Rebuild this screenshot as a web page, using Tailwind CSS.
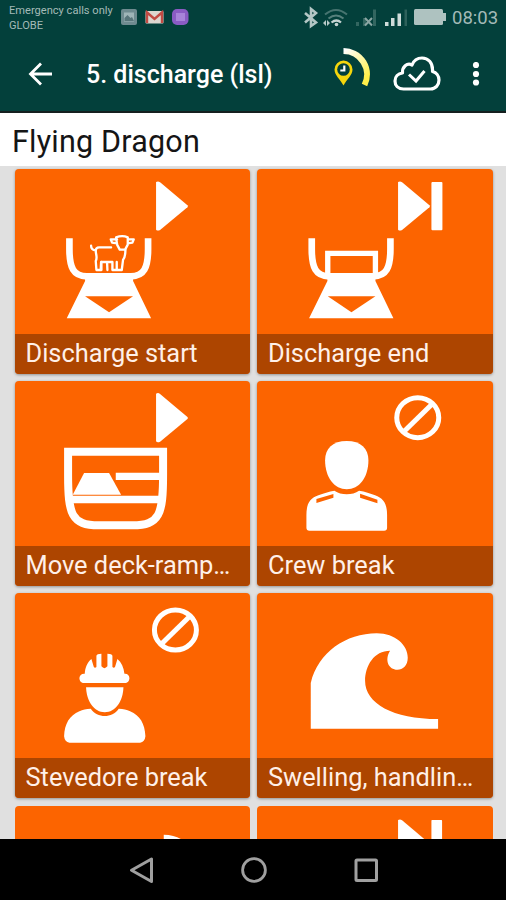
<!DOCTYPE html>
<html lang="en">

<head>
  <meta charset="utf-8">
  <title>5. discharge (lsl)</title>
  <script src="https://cdn.jsdelivr.net/npm/@tailwindcss/browser@4"></script>
</head>

<body class="bg-black font-['Roboto',sans-serif]">
  <div class="flex flex-col h-[900px] w-[506px] overflow-hidden">

    <!-- Status bar + toolbar -->
    <header class="shrink-0 h-[113px] bg-[#03403b] border-b-2 border-[#151f1f]">
      <div class="flex items-start h-9 pl-[9px] pr-2 text-[#a3bab7]">
        <div class="w-[112px] pt-[3px] text-[11.100px] leading-[15px] whitespace-nowrap"><span id="carrier">Emergency calls only</span><br>GLOBE</div>
        <svg class="w-[68px] h-4 mt-[9px]" viewBox="0 0 68 16">
          <rect x="0" y="0" width="16" height="16" rx="2" fill="#6f8b90" />
          <rect x="3" y="3.500" width="10" height="9" fill="#9fb5b8" />
          <path d="M3.500 12V9l3-3 3 3 1.500-1 2 4z" fill="#58757a" />
          <rect x="24.500" y="2" width="18" height="12.500" rx="1" fill="#dcd6cf" />
          <path d="M26 14V3.500l7.500 6.500L41 3.500V14" fill="none" stroke="#c24a43" stroke-width="2.400" />
          <rect x="51" y="0" width="16.500" height="16" rx="5" fill="#8a5cc4" />
          <rect x="55" y="4" width="9" height="8" fill="#a884da" />
        </svg>
        <svg class="w-[146px] h-7 ml-auto mr-[3px] mt-1" viewBox="0 0 146 28" fill="none">
          <path d="M2 9l11 9.500-5 3.500V5l5 4-11 9.500" stroke="#b4c7c5" stroke-width="2.600" />
          <path d="M22 10.500q11-9 22 0" stroke="#477470" stroke-width="2" />
          <path d="M25.500 14.500q7.500-6 15 0" stroke="#56807c" stroke-width="2" />
          <path d="M28.500 18.500q5-4 9.500 0" stroke="#c5d4d2" stroke-width="2.200" />
          <circle cx="33.500" cy="20.500" r="1.800" fill="#c5d4d2" />
          <path d="M20 19l3-3v6zM27 19l-3-3v6z" fill="#b9cac8" />
          <path d="M53 18h3v4h-3zM60 14h3v8h-3zM70 5.500h3V22h-3z" fill="#336660" />
          <path d="M62 14l7 7.500M69 14l-7 7.500" stroke="#8ba6a3" stroke-width="2" />
          <path d="M82 18h3.500v4H82zM88 14h3.500v8H88zM94.500 9.500H98V22h-3.500z" fill="#d0dcda" />
          <path d="M101.500 5.500h2.500V22h-2.500z" fill="#2d615b" />
          <rect x="111" y="5" width="29" height="16" rx="1.500" fill="#aec2c0" />
          <rect x="140" y="9" width="3" height="8" fill="#aec2c0" />
        </svg>
        <div id="clock" class="pt-[7px] w-[46px] text-[18.500px] leading-[22px] whitespace-nowrap">08:03</div>
      </div>

      <div class="flex items-center h-[76px] pl-7 text-white">
        <svg class="w-6 h-6" viewBox="0 0 24 24" fill="none" stroke="#fff" stroke-width="2.800">
          <path d="M24 12H2.500M13 1.500L2.500 12 13 22.500" />
        </svg>
        <h1 class="ml-[34px] mt-0.5 text-[25px] font-medium whitespace-nowrap">5. discharge (lsl)</h1>
        <svg class="w-[37px] h-[42px] ml-auto mr-[22px] -mt-3" viewBox="0 0 37 42">
          <defs>
            <linearGradient id="arc" x1="0" y1="0" x2="0.600" y2="1">
              <stop offset="0" stop-color="#fff" />
              <stop offset="1" stop-color="#fff04a" />
            </linearGradient>
          </defs>
          <path d="M9.500 4A23.500 23.500 0 0 1 30.500 38" fill="none" stroke="url(#arc)" stroke-width="6" />
          <path d="M9.500 38.500C6 32 .5 28 .5 22.500a9 9 0 0 1 18 0C18.500 28 13 32 9.500 38.500z" fill="#f5d60c" />
          <circle cx="9.500" cy="22.500" r="6.300" fill="#03403b" />
          <path d="M10.300 18.500v5H6.300" fill="none" stroke="#fff" stroke-width="2.200" />
        </svg>
        <svg class="w-12 h-9 mr-[31px]" viewBox="0 0 48 36" fill="none" stroke="#fff">
          <path d="M10.500 33C5 33 2 29.500 2 25c0-4.500 3-7.500 7.500-8C9 11 14 6.500 19 9c2-5 6-7 10-7 6.500 0 10.500 5 10.500 11.500v2c4 1 6.500 4.500 6.500 8.500 0 5-3.500 9-8.500 9z" stroke-width="3.200" stroke-linejoin="round" />
          <path d="M16 18.500l7 6.500 8.500-10" stroke-width="3" />
        </svg>
        <svg class="w-2 h-6 mr-[26px]" viewBox="0 0 8 24" fill="#fff">
          <circle cx="4" cy="3" r="3.100" />
          <circle cx="4" cy="12" r="3.100" />
          <circle cx="4" cy="20.500" r="3.100" />
        </svg>
      </div>
    </header>

    <div class="shrink-0 flex items-center h-[53px] pl-3 pt-1 bg-white text-[#151515] text-[30.500px] tracking-[0.200px] whitespace-nowrap"><span id="ship">Flying Dragon</span></div>

    <!-- Activity tiles, the last row runs under the navigation bar -->
    <main class="flex-1 min-h-0 overflow-hidden bg-[#e0e0e0] pt-[2.700px] pl-[14.500px]">
      <div class="grid grid-cols-[235.500px_235.500px] auto-rows-[205px] gap-x-[7px] gap-y-[7.300px] text-[#fff0e8] text-[25.400px]">

        <div class="flex flex-col rounded bg-[#fc6400] shadow-[0_1px_3px_rgba(0,0,0,.35)] overflow-hidden">
          <svg class="w-full h-[165px]" viewBox="15 11 706 495" fill="#fff">
            <path d="M438 50q6-4 12 1l82 69q3 3 0 6l-82 68q-8 4-12-1z" />
            <path d="M178 219v32c0 56 12 82 52 82h132c40 0 52-26 52-82v-32" fill="none" stroke="#fff" stroke-width="20" />
            <path d="M225 325h144v22l54 112H170l55-112z" />
            <path d="M225 393h144l-72 48z" fill="#fc6400" />
            <g fill="none" stroke="#fff" stroke-width="7" stroke-linejoin="round" stroke-linecap="round">
              <path d="M243 241c0 9 5 13 14 14M303 246h-36c-7 0-10 4-10 10 0 12 6 20 0 31l2 27h15v-24h33v24h28l4-31c7-8 7-16 7-29M273 290l-1 22M291 292l1 22M320 290v22" />
              <path d="M321 222h-19l4 10 15 2M353 222h18l-4 10-14 2M318 216q19-7 35 0v22l-8 15h-16l-8-15z" />
            </g>
          </svg>
          <div class="h-10 pl-[11px] leading-[38px] bg-[#ad4500] whitespace-nowrap">Discharge start</div>
        </div>

        <div class="flex flex-col rounded bg-[#fc6400] shadow-[0_1px_3px_rgba(0,0,0,.35)] overflow-hidden">
          <svg class="w-full h-[165px]" viewBox="13 11 706 495" fill="#fff">
            <path d="M436 50q6-4 12 1l82 69q3 3 0 6l-82 68q-8 4-12-1z" />
            <rect x="536" y="50" width="33" height="145" rx="3" />
            <path d="M177 219v32c0 56 12 82 52 82h132c40 0 52-26 52-82v-32" fill="none" stroke="#fff" stroke-width="20" />
            <path d="M225 335v-71h143v71" fill="none" stroke="#fff" stroke-width="16" />
            <path d="M224 325h144v22l54 112H169l55-112z" />
            <path d="M225 393h143l-72 48z" fill="#fc6400" />
          </svg>
          <div class="h-10 pl-[11px] leading-[38px] bg-[#ad4500] whitespace-nowrap">Discharge end</div>
        </div>

        <div class="flex flex-col rounded bg-[#fc6400] shadow-[0_1px_3px_rgba(0,0,0,.35)] overflow-hidden">
          <svg class="w-full h-[165px]" viewBox="15 10 706 495" fill="#fff">
            <path d="M438 48q6-4 12 1l82 69q3 3 0 6l-82 68q-8 4-12-1z" />
            <path d="M174 222h285v70c0 118-10 151-92 151H266c-82 0-92-33-92-151z" fill="none" stroke="#fff" stroke-width="24" />
            <path d="M317 285h132v22H317zM180 354h272v23H180z" />
            <path d="M222 286h75l36 65H188z" />
          </svg>
          <div class="h-10 pl-[11px] leading-[38px] bg-[#ad4500] whitespace-nowrap">Move deck-ramp…</div>
        </div>

        <div class="flex flex-col rounded bg-[#fc6400] shadow-[0_1px_3px_rgba(0,0,0,.35)] overflow-hidden">
          <svg class="w-full h-[165px]" viewBox="13 10 706 495" fill="#fff">
            <g fill="none" stroke="#fff" stroke-width="15">
              <ellipse cx="495" cy="120" rx="63" ry="60" />
              <path d="M453 162l86-84" />
            </g>
            <path d="M282 190c42 0 65 22 65 58 0 52-28 87-65 87s-65-35-65-87c0-36 23-58 65-58z" />
            <path d="M161 450v-38c0-36 12-51 36-59 14-5 32-12 48-14 20 14 54 14 74 0 18 2 34 9 48 14 24 9 36 23 36 59v38q0 9-9 9H170q-9 0-9-9z" />
            <path d="M191 364l51-15v11l-51 16zM322 348l52 18v11l-52-17z" fill="#fc6400" />
          </svg>
          <div class="h-10 pl-[11px] leading-[38px] bg-[#ad4500] whitespace-nowrap">Crew break</div>
        </div>

        <div class="flex flex-col rounded bg-[#fc6400] shadow-[0_1px_3px_rgba(0,0,0,.35)] overflow-hidden">
          <svg class="w-full h-[165px]" viewBox="15 10 706 495" fill="#fff">
            <g fill="none" stroke="#fff" stroke-width="15">
              <ellipse cx="496" cy="121" rx="63" ry="60" />
              <path d="M454 163l86-84" />
            </g>
            <path d="M224 252c1-18 8-34 20-44l7 23q3 6 8 1V198q1-6 15-6v38q9 11 18 0v-38q14 0 15 6v34q5 5 8-1l7-23c12 10 19 26 21 44 9-1 15 5 15 13 0 9-6 15-14 15H222c-8 0-14-6-14-15 0-8 7-14 16-13z" />
            <path d="M228 293h112c-1 42-24 75-56 75s-55-33-56-75z" />
            <path d="M162 440c2-38 16-62 46-75 10-5 20-7 34-8 20 29 64 29 84 0 14 1 24 3 34 8 30 13 44 37 46 75q-2 18-16 19H178q-14-1-16-19z" />
          </svg>
          <div class="h-10 pl-[11px] leading-[38px] bg-[#ad4500] whitespace-nowrap">Stevedore break</div>
        </div>

        <div class="flex flex-col rounded bg-[#fc6400] shadow-[0_1px_3px_rgba(0,0,0,.35)] overflow-hidden">
          <svg class="w-full h-[165px]" viewBox="13 10 706 495" fill="#fff">
            <path d="M174 417V280c22-92 106-149 198-149 56 0 93 36 93 73 0 24-15 36-31 36-26 0-40-28-22-57-48 0-75 45-75 90 0 68 83 115 219 115v29z" />
          </svg>
          <div class="h-10 pl-[11px] leading-[38px] bg-[#ad4500] whitespace-nowrap">Swelling, handlin…</div>
        </div>

        <div class="flex flex-col rounded bg-[#fc6400] overflow-hidden">
          <svg class="w-full h-[165px]" viewBox="15 11 706 495" fill="#fff">
            <path d="M461 97c60 0 90 40 90 90H461z" />
          </svg>
        </div>

        <div class="flex flex-col rounded bg-[#fc6400] overflow-hidden">
          <svg class="w-full h-[165px]" viewBox="13 11 706 495" fill="#fff">
            <path d="M436 53q6-4 12 1l82 69q3 3 0 6l-82 68q-8 4-12-1z" />
            <rect x="536" y="53" width="32" height="145" rx="2" />
          </svg>
        </div>
      </div>
    </main>

    <!-- Android navigation -->
    <nav class="shrink-0 flex items-center h-[61px] pl-[129px] gap-[87px] bg-black">
      <svg class="w-[25px] h-7" viewBox="0 0 25 28" fill="none" stroke="#a0a0a0" stroke-width="3">
        <path d="M22.500 3v22.500L2.500 14.200z" stroke-linejoin="round" />
      </svg>
      <svg class="w-[26px] h-[26px]" viewBox="0 0 26 26" fill="none" stroke="#a0a0a0" stroke-width="2.800">
        <circle cx="13" cy="13" r="11.400" />
      </svg>
      <svg class="w-6 h-6" viewBox="0 0 24 24" fill="none" stroke="#a0a0a0" stroke-width="3">
        <rect x="2" y="2" width="20.500" height="20.500" rx="1" />
      </svg>
    </nav>
  </div>
</body>

</html>
